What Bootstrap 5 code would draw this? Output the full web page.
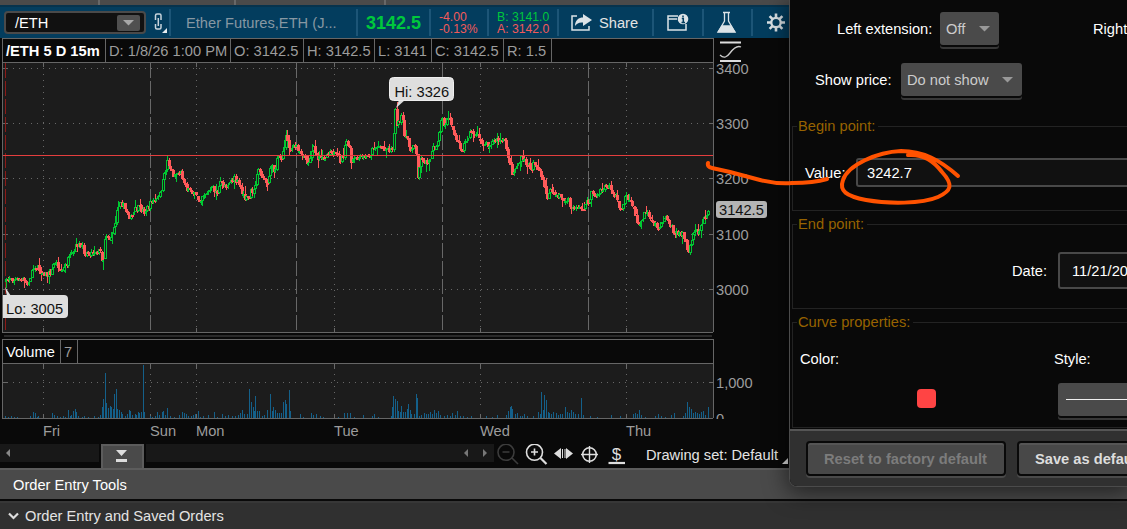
<!DOCTYPE html>
<html lang="en">
<head>
<meta charset="utf-8">
<meta name="viewport" content="width=device-width, initial-scale=1">
<title>/ETH chart</title>
<link href="https://cdn.jsdelivr.net/npm/bootstrap@5.3.0/dist/css/bootstrap.min.css" rel="stylesheet">
<style>
body{font:14.67px/18px "Liberation Sans",Arial,sans-serif;background:#090909;color:#e4e4e4;overflow:hidden;white-space:nowrap}
svg{display:block;flex:none}
.desk{width:1127px;height:529px}
.desk .d-flex>span,.desk .d-flex>div{flex-shrink:0}
.tabstrip{height:5px;background:#4a4a4a}
.tabstrip i{width:2px;height:5px;background:#686868}
.toolbar{height:33px;width:789px;background:#033d5e;border-top:2px solid #06334d}
.cell{height:27px;border-right:2px solid #1c5577}
.symbol{width:142px;height:23px;margin-left:4px;background:#111;border:2px solid #4a4a4a;border-radius:4px}
.symbol b{width:23px;height:16px;background:#505050;border-radius:2px}
.quote{font-size:12.2px;line-height:12px}
.up{color:#00c83c}.down{color:#f25a5a}
.last{font-size:18px;font-weight:700}
.info{width:712px;margin-left:2px;height:25px;border:1px solid #666;color:#9c9c9c}
.info span{border-right:1px solid #666;height:23px;line-height:24px;padding-left:3px;flex:none}
.info .main{color:#fff}
.axis{fill:#9c9c9c;font-size:14.67px}
.splitter{height:2px;width:708px;margin:1px 0 2px 4px;background:#2a2a2a}
.navrow{height:24px;width:789px}
.track{height:18px;background:#181818}
.pulltab{width:43px;height:25px;margin:0 2px;background:#4a4a4a;border:2px solid #5c5c5c;border-bottom:0}
.panel1{height:31px;background:#4a4a4a;border-top:2px solid #5c5c5c}
.panel2{height:28px;margin-top:2px;background:#303030;border-top:2px solid #373737}
.dialog{left:789px;top:0;width:340px;height:487px;background:#090909;border:1px solid #4b4b4b;border-top:0;border-radius:0 0 0 8px;box-shadow:0 4px 22px 2px #0008;color:#fff;overflow:hidden}
.pick{height:33px;background:#4a4a4a;border-radius:3px;color:#ccc;box-shadow:0 2px #090909,0 4px #383838;padding:0 13px 0 6px}
.group{border:1px solid #232323;margin:0 0 0 2px;width:400px;padding:0;min-width:0;position:relative}
.group legend{float:none;width:auto;margin:0 0 0 4px;padding:0 3px 0 1px;font-size:14.67px;line-height:18px;color:#976300}
.entry{background:#111;border:2px solid #494949;border-radius:3px}
.foot{height:57px;background:#303030;border-top:2px solid #555;padding:10px 0 0 16px}
.act{height:35px;border:2px solid #090909;border-radius:4px;background:#484848;box-shadow:0 2px #4a4a4a,inset 0 2px #555;font-weight:700;line-height:33px;padding:0 16px}
.ink{left:0;top:0;pointer-events:none}
</style>
</head>
<body>
<div class="desk position-relative overflow-hidden d-flex flex-column">
  <div class="tabstrip d-flex"><i style="margin-left:98px"></i><i style="margin-left:134px"></i><i style="margin-left:148px"></i></div>

  <div class="toolbar d-flex align-items-center">
    <div class="symbol d-flex align-items-center justify-content-between ps-2 pe-1 text-white"><span style="padding-left:1px">/ETH</span><b class="d-flex align-items-center justify-content-center me-n1"><svg width="11" height="6"><path d="M0 0h11L5.500 5.500z" fill="#a8a8a8"/></svg></b></div>
    <div class="cell" style="width:25px"><svg width="23" height="27" fill="none" stroke="#c8d4dc" stroke-width="1.500"><path d="M9.500 11V6.500q0-1.500 1.500-1.500h2.500q1.500 0 1.500 1.500V11M9.500 15v3.500q0 1.500 1.500 1.500h2.500q1.500 0 1.500-1.500V15M12.300 9v8"/><path d="M21 19v5h-5z" fill="#e8eef2" stroke="none"/></svg></div>
    <div class="cell d-flex align-items-center" style="width:187px;padding-left:15px;color:#8798a3">Ether Futures,ETH (J...</div>
    <div class="cell last up d-flex align-items-center" style="width:73px;padding-left:8px">3142.5</div>
    <div class="cell quote down" style="width:58px;padding:2px 0 0 8px">-4.00<br>-0.13%</div>
    <div class="cell quote" style="width:70px;padding:2px 0 0 8px"><span class="up">B: 3141.0</span><br><span class="down">A: 3142.0</span></div>
    <div class="cell d-flex align-items-center" style="width:95px;padding-left:12px"><svg width="22" height="19" class="me-2"><path d="M6 3H1v14h17v-4" fill="none" stroke="#dce3e7" stroke-width="1.500"/><path d="M12 1l9 6-9 6V9.500C8 9 6 10.500 4 13 4 7 8 4.500 12 4.500z" fill="#dce3e7"/></svg><span style="margin-left:-2px">Share</span></div>
    <div class="cell" style="width:50px"><svg width="48" height="27"><path d="M24 7H14V21H32V15M14 10h9" fill="none" stroke="#dce3e7" stroke-width="1.500"/><circle cx="29" cy="10" r="5.300" fill="#dce3e7"/><path d="M29 6.500v1.800M27.800 9.500h1.500v4M27.500 13.500h3.500" fill="none" stroke="#033d5e" stroke-width="1.500"/></svg></div>
    <div class="cell" style="width:49px"><svg width="47" height="27" fill="none" stroke="#dce3e7" stroke-width="1.300"><path d="M19 3.500h7M20.500 4v8L14.500 22.500h16L24.500 12V4"/><path d="M18 17h9l4 6H14z" fill="#dce3e7"/></svg></div>
    <svg width="36" height="27"><g stroke="#dce3e7" fill="none"><circle cx="23" cy="13.500" r="4.700" stroke-width="2.300"/><path stroke-width="2.600" d="M23 4.500v4M23 18.500v4M14 13.500h4M28 13.500h4M16.600 7.100l2.800 2.800M26.600 17.100l2.800 2.800M29.400 7.100l-2.800 2.800M19.400 17.100l-2.800 2.800"/></g></svg>
  </div>

  <div class="d-flex">
    <div class="info d-flex">
      <span class="main fw-bold" style="width:103px">/ETH 5 D 15m</span><span style="width:125px">D: 1/8/26 1:00 PM</span><span style="width:73px">O: 3142.5</span><span style="width:71px">H: 3142.5</span><span style="width:57px">L: 3141</span><span style="width:72px">C: 3142.5</span><span style="width:48px">R: 1.5</span>
    </div>
    <svg width="34" height="25"><path d="M6 4.500h21M6 23h21" stroke="#ddd" stroke-width="2"/><path d="M6 17c4 4 7 2 10-2s7-8 11-6" fill="none" stroke="#ccc" stroke-width="1.300"/></svg>
  </div>
  <svg id="price" width="789" height="270" viewBox="0 63 789 270"></svg>
  <div class="splitter flex-shrink-0" style="margin-top:2px"></div>
  <div class="info d-flex flex-shrink-0"><span class="main" style="width:58px">Volume</span><span style="width:17px">7</span></div>
  <svg id="volume" width="789" height="80" viewBox="0 364 789 80"></svg>

  <div class="navrow d-flex flex-shrink-0">
    <div class="track" style="width:99px"><svg width="20" height="18"><path d="M10 5v8L6 9z" fill="#888"/></svg></div>
    <div class="pulltab"><svg width="39" height="23"><path d="M13 4h11l-5.500 6zM13 13h11v3H13z" fill="#ddd"/></svg></div>
    <div class="track" style="width:348px"><svg width="348" height="18"><path d="M322 5v8l-4-4zM337 5v8l4-4z" fill="#777"/></svg></div>
    <svg width="146" height="24" viewBox="494 444 146 24" fill="none" stroke="#dedede" stroke-width="1.600">
      <g stroke="#3c3c3c"><circle cx="506" cy="452.300" r="8"/><path d="M502.500 452h7M512 458l6 6"/></g>
      <circle cx="534.500" cy="452.300" r="8"/><path d="M531 452h7M534.500 448.500v7"/><path d="M540.500 458l6 6" stroke-width="2.200"/>
      <path d="M561 448v11l-7-5.500zM566 448v11l7-5.500z" fill="#dedede" stroke="none"/><path d="M562.500 449v9M565 449v9" stroke-width="1"/>
      <circle cx="589.500" cy="454.500" r="6.800"/><path d="M581 454.500h17M589.500 446v17" stroke-width="1.400"/>
      <path d="M608.500 463h16.500" stroke-width="2.200"/><text x="616.500" y="459.500" font-size="17" text-anchor="middle" fill="#dedede" stroke="none">$</text>
    </svg>
    <span style="margin-left:6px;padding-top:2px">Drawing set: Default</span>
    <svg width="12" height="24"><path d="M10 14v6H4z" fill="#ddd"/></svg>
  </div>
  <div class="panel1 d-flex align-items-center flex-shrink-0" style="padding-left:13px;color:#fff">Order Entry Tools</div>
  <div class="panel2 d-flex align-items-center flex-shrink-0" style="padding-left:8px"><svg width="11" height="8" class="me-1"><path d="M1 1.500l4.500 4.500L10 1.500" fill="none" stroke="#ddd" stroke-width="2.200"/></svg><span style="margin-left:2px">Order Entry and Saved Orders</span></div>

  <section class="dialog position-absolute d-flex flex-column">
    <div class="d-flex align-items-center flex-shrink-0" style="height:33px;margin:12px 0 0 47px">
      <span style="width:103px">Left extension:</span>
      <span class="pick d-flex align-items-center justify-content-between" style="width:59px;padding-right:9px">Off<svg width="11" height="6"><path d="M0 0h11L5.500 5.500z" fill="#999"/></svg></span>
      <span style="margin-left:94px">Right extension:</span>
    </div>
    <div class="d-flex align-items-center flex-shrink-0" style="height:33px;margin:18px 0 0 25px">
      <span style="width:86px">Show price:</span>
      <span class="pick d-flex align-items-center justify-content-between" style="width:121px;padding-right:9px">Do not show<svg width="11" height="6"><path d="M0 0h11L5.500 5.500z" fill="#999"/></svg></span>
    </div>
    <fieldset class="group flex-shrink-0" style="margin-top:21px;height:94px">
      <legend>Begin point:</legend>
      <div class="d-flex align-items-center" style="margin:23px 0 0 12px"><span style="width:51px">Value:</span><span class="entry d-flex align-items-center" style="width:330px;height:29px;padding-left:9px">3242.7</span></div>
    </fieldset>
    <fieldset class="group flex-shrink-0" style="margin-top:4px;height:94px">
      <legend>End point:</legend>
      <div class="d-flex align-items-center" style="margin:19px 0 0 219px"><span style="width:46px">Date:</span><span class="entry d-flex align-items-center" style="width:150px;height:37px;padding-left:12px">11/21/2025</span></div>
    </fieldset>
    <fieldset class="group flex-shrink-0" style="margin-top:4px;height:115px">
      <legend>Curve properties:</legend>
      <div class="d-flex" style="margin:19px 0 0 7px"><span style="width:254px">Color:</span><span>Style:</span></div>
      <div class="d-flex" style="margin:15px 0 0 124px"><span class="rounded-1" style="width:19px;height:19px;margin-top:6px;background:#ff4444"></span><span class="pick d-flex align-items-center" style="width:150px;margin-left:122px"><svg width="130" height="2"><path d="M2 .5h128" stroke="#eee"/></svg></span></div>
    </fieldset>
    <div class="foot d-flex mt-auto flex-shrink-0"><span class="act" style="width:200px;color:#7c7c7c">Reset to factory default</span><span class="act" style="width:170px;margin-left:11px;color:#ddd">Save as default</span></div>
  </section>

  <svg class="ink position-absolute" width="1127" height="529" fill="none" stroke="#ff5200" stroke-width="4" stroke-linecap="round" stroke-linejoin="round"><path d="M708 163q-1 4 4 5l18 4 30 8q16 4 32 3 22 0 35-4"/><path d="M908 155c14-1 26 6 34 17 12 13 9 19-4 25-16 7-50 7-72 3-20-4-27-9-23-20 5-15 34-28 58-29 22 0 39 9 57 25"/></svg>
</div>
<script src="https://cdn.jsdelivr.net/npm/bootstrap@5.3.0/dist/js/bootstrap.bundle.min.js"></script>
<script>
const DAYS=[[43,'Fri'],[196,'Mon'],[334,'Tue'],[480,'Wed'],[626,'Thu']];
const PRICE=[6,282,8,278,10,276,14,280,19,278,23,281,27,285,29,284,31,272,35,265,38,269,42,272,47,275,52,270,54,261,58,266,61,272,66,265,70,257,74,253,77,243,80,246,85,253,91,253,96,250,100,252,103,262,105,235,107,233,109,240,114,230,117,210,120,199,122,205,127,213,131,218,135,210,139,208,144,212,150,205,152,200,156,202,160,193,164,176,167,160,170,168,173,175,176,173,181,173,184,180,187,189,192,189,195,197,199,200,203,193,208,192,213,188,217,193,221,182,226,185,230,181,234,179,240,188,244,199,249,198,251,191,254,190,257,170,261,173,265,181,268,186,270,165,274,172,277,155,282,158,286,134,289,147,292,149,296,146,300,151,304,156,308,163,311,155,313,143,316,158,321,160,326,155,331,150,336,156,341,160,344,155,346,141,349,147,351,162,356,159,361,158,366,157,370,155,374,147,380,146,386,149,392,150,394,125,395,110,397,125,400,124,402,115,404,132,407,140,410,150,413,143,416,150,418,176,420,162,422,157,425,163,429,159,432,150,437,148,440,125,442,119,444,130,446,120,449,117,451,123,454,130,457,142,462,148,467,138,471,131,476,136,482,142,488,144,492,142,498,140,505,143,508,158,513,174,517,164,522,159,526,163,532,168,534,160,538,170,543,183,547,197,552,190,556,198,560,194,564,202,568,200,572,210,576,205,580,210,585,205,589,200,592,190,596,197,601,191,605,187,609,186,613,198,616,198,620,210,625,198,630,198,634,208,637,222,640,227,643,216,648,212,653,223,659,227,664,216,668,220,672,229,677,235,682,232,686,243,688,256,690,248,694,230,698,231,702,222,706,215,709,210];
// bar x and height pairs
const VOL=[5,2,8,1,11,2,14,1,17,1,30,2,33,6,35,5,37,1,38,2,52,5,54,3,57,2,60,1,63,2,65,1,68,8,70,2,71,3,73,7,75,9,76,6,78,2,82,1,84,2,88,1,94,2,98,1,100,3,102,11,103,19,105,45,106,15,108,10,110,12,111,11,113,9,114,24,116,29,117,9,119,8,121,6,122,4,125,2,127,4,129,8,130,7,132,3,135,4,136,3,138,6,139,5,141,6,143,53,144,6,150,2,152,1,155,2,157,6,159,3,162,6,163,7,165,3,167,10,170,2,174,1,179,3,182,6,184,5,186,4,188,2,191,2,193,3,195,4,198,7,200,1,203,2,208,3,214,6,217,1,222,4,225,2,228,3,232,2,235,2,238,3,240,5,242,8,244,4,247,4,249,29,251,16,253,11,254,7,255,22,257,7,259,7,262,2,264,3,267,8,270,24,272,7,273,11,275,8,277,5,279,5,281,5,283,16,285,18,286,14,289,28,290,7,300,4,303,1,311,5,313,3,316,4,320,2,323,1,338,1,344,5,347,5,350,5,354,1,363,3,372,2,374,4,378,1,391,2,392,11,393,22,395,19,397,17,398,7,400,6,401,12,403,6,405,6,407,9,408,14,410,8,411,4,414,4,416,24,417,20,419,2,421,3,424,5,426,4,428,4,430,6,432,4,434,8,436,5,438,7,440,3,444,2,447,3,450,2,452,5,455,3,457,7,460,2,463,2,467,1,471,2,486,2,492,1,497,3,506,3,508,7,510,11,511,12,512,9,515,4,517,5,520,2,522,2,524,4,527,2,533,2,538,6,540,4,541,26,543,8,544,23,546,18,548,6,549,5,551,4,553,6,556,5,558,3,560,4,562,4,565,11,567,6,569,5,571,8,573,6,575,4,578,4,581,20,583,3,590,2,597,1,611,3,620,2,633,4,635,5,637,4,639,8,641,3,645,1,655,2,658,4,661,2,665,1,671,3,674,5,683,2,685,5,687,16,689,11,691,9,693,5,695,6,697,5,699,4,701,6,703,7,705,3,708,11];
// one-pixel straight line, shifted half a pixel across its direction so it stays sharp
const line=(x1,y1,x2,y2,c,d='none')=>{const v=x1===x2?.5:0,h=y1===y2?.5:0;return `<path d="M${x1+v} ${y1+h}L${x2+v} ${y2+h}" stroke="${c}" stroke-dasharray="${d}"/>`};
const label=(x,y,t)=>`<text class="axis" x="${x}" y="${y}">${t}</text>`;
const GRID='#686868';
let s='<rect x="3" y="63" width="710" height="269" fill="#1c1c1c"/>';
[[68,3400],[123,3300],[178,3200],[234,3100],[289,3000]].forEach(([y,t])=>{s+=line(7,y,706,y,GRID,'1 5')+line(3,y,7,y,GRID)+line(709,y,713,y,GRID)+label(716,y+6,t)});
DAYS.forEach(([x])=>{s+=line(x,68,x,328,GRID,'1 5')+line(x,63,x,67,GRID)+line(x,328,x,332,GRID)});
[150,296,442,588].forEach(x=>s+=line(x,63,x,331,'#686868','15 3'));
s+=line(5,63,5,331,'#8c1a18','15 3');
let seed=7;const rnd=()=>(seed=(seed*16807)%2147483647)/2147483647;
let k=0,prev=282;
for(let x=6;x<=709;x+=1.52){
  while(k<PRICE.length-4&&PRICE[k+2]<x)k+=2;
  const t=Math.min(1,(x-PRICE[k])/(PRICE[k+2]-PRICE[k]));
  const y=PRICE[k+1]+(PRICE[k+3]-PRICE[k+1])*t+(rnd()-.5)*7;
  const top=Math.round(Math.min(y,prev)),h=Math.max(2,Math.round(Math.abs(y-prev))),px=Math.round(x),up=y<prev,c=up?'#00c832':'#ff5a5a';
  const w1=Math.round(rnd()<.25?rnd()*8:rnd()*2),w2=Math.round(rnd()<.25?rnd()*8:rnd()*2);
  s+=line(px,top-w1,px,top+h+w2,c);
  s+=up&&h>3?`<rect x="${px-.5}" y="${top+.5}" width="2" height="${h-1}" fill="#1c1c1c" stroke="${c}"/>`:`<rect x="${px-1}" y="${top}" width="${up?2:3}" height="${h}" fill="${c}"/>`;
  prev=y;
}
s+=line(3,155,713,155,'#e43e3e')+line(2,63,2,332,'#666')+line(713,63,713,332,'#666')+line(2,332,713,332,'#666');
s+='<path d="M399 100h6l-9 8zM11 296l-6-9 2 9z" fill="#ddd"/><rect x="389.500" y="77.500" width="64" height="23" rx="4" fill="#dedede" stroke="#eee"/><text x="394.500" y="97" font-size="14.670" fill="#111">Hi: 3326</text><path d="M3 295h61q4 0 4 4v15q0 4-4 4H3z" fill="#dedede"/><text x="6" y="314" font-size="14.670" fill="#111">Lo: 3005</text><rect x="716" y="201" width="51" height="17" rx="3" fill="#b4b4b4"/><text x="719" y="215" font-size="14.670" fill="#111">3142.5</text>';
document.getElementById('price').innerHTML=s;
let v='<rect x="3" y="364" width="710" height="54" fill="#1c1c1c"/>'+line(7,382,706,382,GRID,'1 5')+line(3,382,7,382,GRID)+line(709,382,713,382,GRID);
DAYS.concat([[150,'Sun']]).forEach(([x,t])=>{v+=line(x,368,x,405,GRID,'1 5')+line(x,364,x,368,GRID)+line(x,414,x,418,GRID)+label(x,436,t)});
for(let i=0;i<VOL.length;i+=2)v+=`<rect x="${VOL[i]}" y="${418-VOL[i+1]}" width="1" height="${VOL[i+1]}" fill="#14608a"/>`;
v+=line(2,364,2,418,'#666')+line(713,364,713,418,'#666')+line(2,418,713,418,'#666')+label(716,388,'1,000')+'<svg x="716" y="413" width="20" height="6"><text class="axis" x="0" y="11">0</text></svg>';
document.getElementById('volume').innerHTML=v;
</script>
</body>
</html>
